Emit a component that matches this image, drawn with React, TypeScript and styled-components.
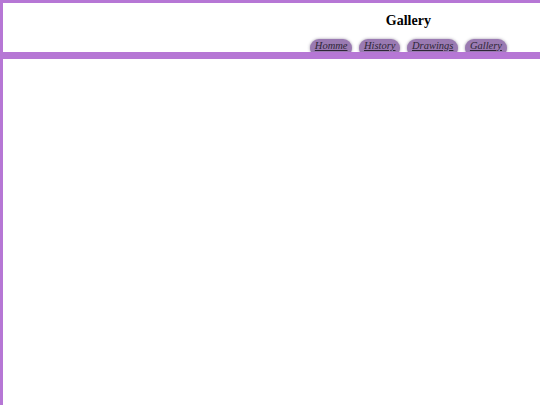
import React from "react";
import styled, { createGlobalStyle } from "styled-components";

const GlobalStyle = createGlobalStyle`
  html, body {
    margin: 0;
    padding: 0;
    background: #ffffff;
  }
  body {
    font-family: "Liberation Serif", "Times New Roman", serif;
  }
`;

const links = ["Homme", "History", "Drawings", "Gallery"];

const App = () => {
  return (
    <>
      <GlobalStyle />
      <Page>
        <Header>
          <Group>
            <Title>Gallery</Title>
            <Nav>
              {links.map((item) => (
                <NavButton key={item} href="#">
                  {item}
                </NavButton>
              ))}
            </Nav>
          </Group>
        </Header>
        <Content />
      </Page>
    </>
  );
};

const Page = styled.div`
  min-height: 405px;
  box-sizing: border-box;
  border-top: 3px solid #b677d5;
  border-left: 3px solid #b677d5;
  display: flex;
  flex-direction: column;
`;

const Header = styled.header`
  height: 49px;
  overflow: hidden;
  display: flex;
  justify-content: flex-end;
  padding-right: 33px;
  border-bottom: 7px solid #b677d5;
`;

const Group = styled.div`
  display: flex;
  flex-direction: column;
  align-items: center;
`;

const Title = styled.h1`
  margin: 9px 0 0;
  font-size: 14px;
  font-weight: bold;
  color: #000;
  line-height: 17px;
`;

const Nav = styled.nav`
  display: flex;
  gap: 6.5px;
  margin-top: 10px;
`;

const NavButton = styled.a`
  display: block;
  height: 18px;
  line-height: 14px;
  padding: 0 5px;
  border-radius: 9px;
  background: #9a7ab2;
  box-shadow: 0 0 3px rgba(60, 40, 80, 0.5);
  color: #2e2636;
  font-style: italic;
  font-size: 10.5px;
  text-decoration: underline;
`;

const Content = styled.main`
  flex: 1;
`;

export default App;
